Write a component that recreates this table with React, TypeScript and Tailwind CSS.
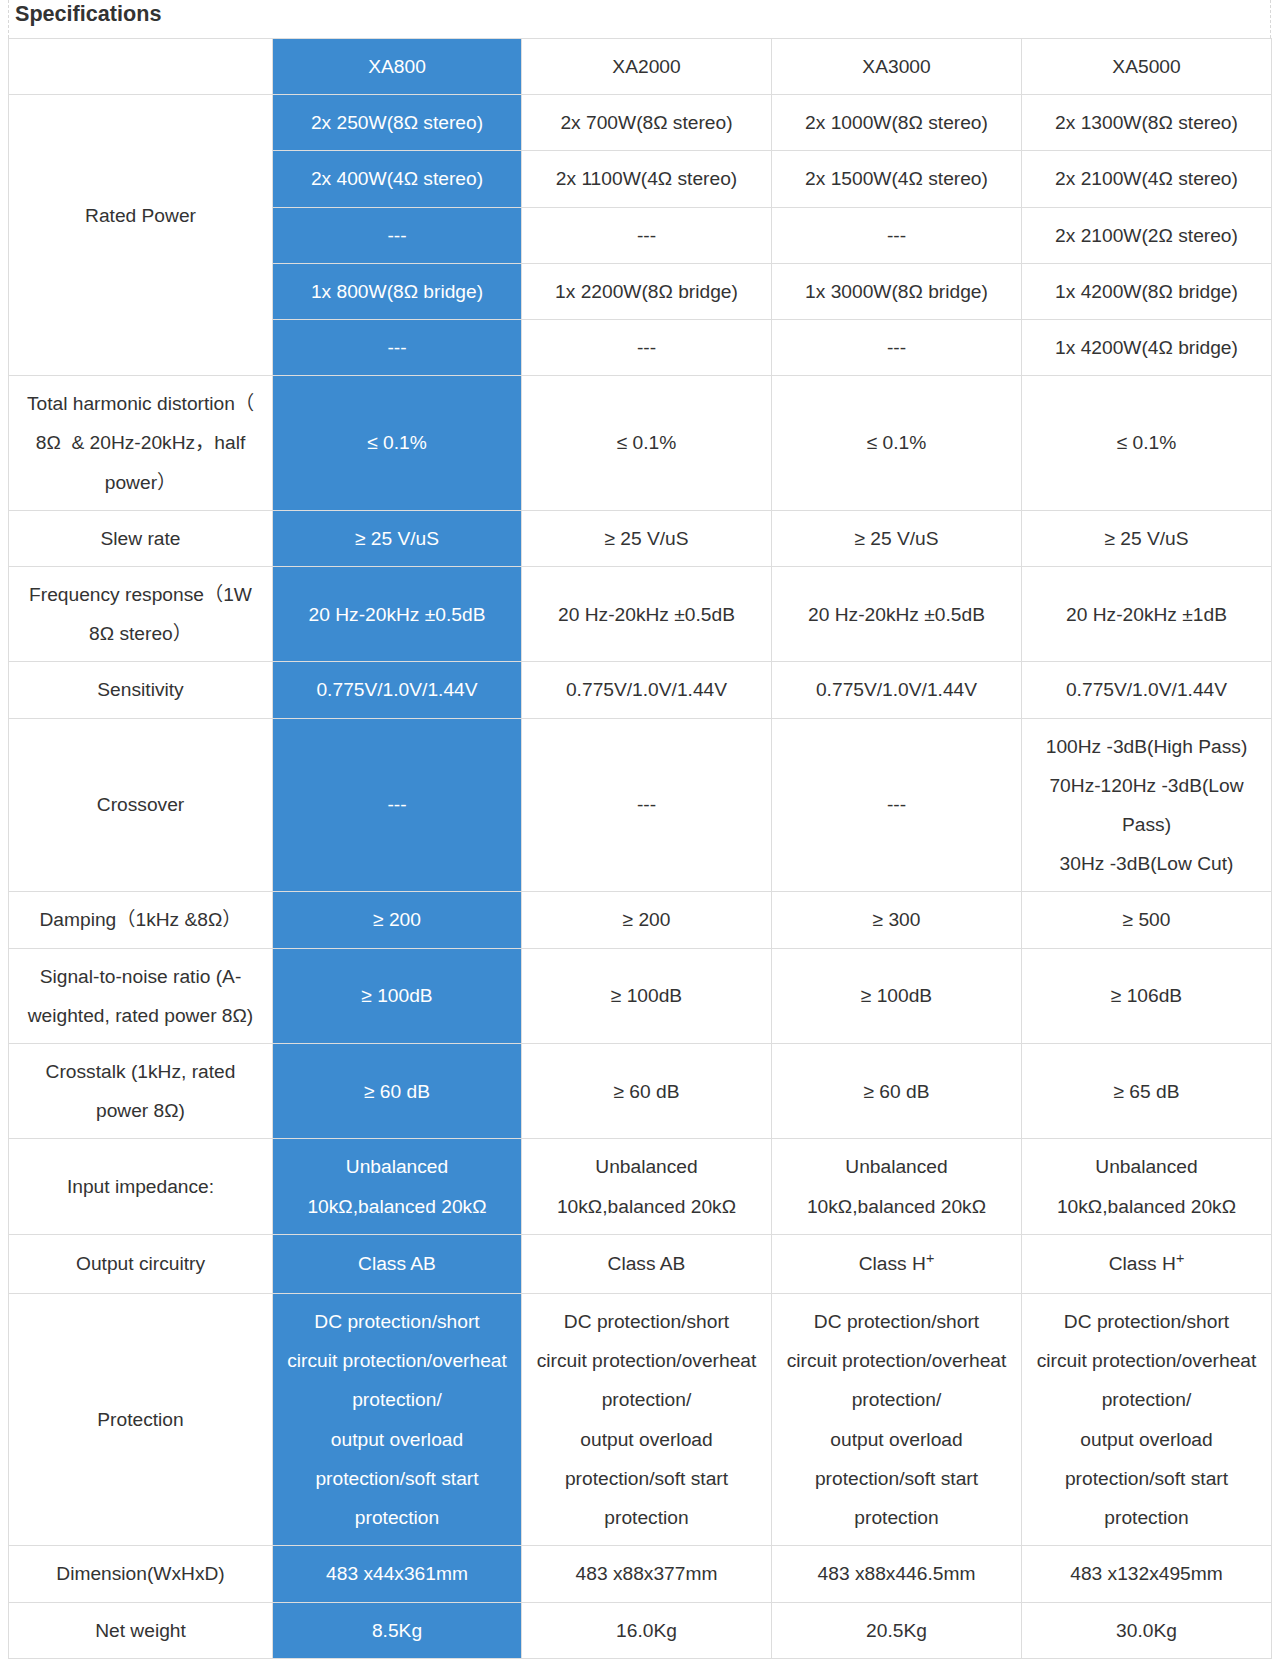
import React from 'react';

type Row = { label: React.ReactNode; cells: React.ReactNode[]; tall?: boolean };

const models = ['XA800', 'XA2000', 'XA3000', 'XA5000'];

const ratedPower: string[][] = [
  ['2x 250W(8Ω stereo)', '2x 700W(8Ω stereo)', '2x 1000W(8Ω stereo)', '2x 1300W(8Ω stereo)'],
  ['2x 400W(4Ω stereo)', '2x 1100W(4Ω stereo)', '2x 1500W(4Ω stereo)', '2x 2100W(4Ω stereo)'],
  ['---', '---', '---', '2x 2100W(2Ω stereo)'],
  ['1x 800W(8Ω bridge)', '1x 2200W(8Ω bridge)', '1x 3000W(8Ω bridge)', '1x 4200W(8Ω bridge)'],
  ['---', '---', '---', '1x 4200W(4Ω bridge)'],
];

const protection = (
  <div className="mx-auto w-[220px]">
    DC protection/short circuit protection/overheat protection/
    <br />
    output overload protection/soft start protection
  </div>
);

const impedance = (
  <>
    Unbalanced
    <br />
    10kΩ,balanced 20kΩ
  </>
);

const classH = (
  <>
    Class H<sup>+</sup>
  </>
);

const rows: Row[] = [
  {
    label: (
      <>
        Total harmonic distortion（
        <br />
        8Ω{'\u00a0'} & 20Hz-20kHz，half power）
      </>
    ),
    cells: ['≤ 0.1%', '≤ 0.1%', '≤ 0.1%', '≤ 0.1%'],
  },
  { label: 'Slew rate', cells: ['≥ 25 V/uS', '≥ 25 V/uS', '≥ 25 V/uS', '≥ 25 V/uS'] },
  {
    label: 'Frequency response（1W 8Ω stereo）',
    cells: ['20 Hz-20kHz ±0.5dB', '20 Hz-20kHz ±0.5dB', '20 Hz-20kHz ±0.5dB', '20 Hz-20kHz ±1dB'],
  },
  { label: 'Sensitivity', cells: ['0.775V/1.0V/1.44V', '0.775V/1.0V/1.44V', '0.775V/1.0V/1.44V', '0.775V/1.0V/1.44V'] },
  {
    label: 'Crossover',
    cells: [
      '---',
      '---',
      '---',
      <>
        100Hz -3dB(High Pass)
        <br />
        70Hz-120Hz -3dB(Low Pass)
        <br />
        30Hz -3dB(Low Cut)
      </>,
    ],
  },
  { label: 'Damping（1kHz &8Ω）', cells: ['≥ 200', '≥ 200', '≥ 300', '≥ 500'] },
  { label: 'Signal-to-noise ratio (A-weighted, rated power 8Ω)', cells: ['≥ 100dB', '≥ 100dB', '≥ 100dB', '≥ 106dB'] },
  { label: 'Crosstalk (1kHz, rated power 8Ω)', cells: ['≥ 60 dB', '≥ 60 dB', '≥ 60 dB', '≥ 65 dB'] },
  { label: 'Input impedance:', cells: [impedance, impedance, impedance, impedance] },
  { label: 'Output circuitry', cells: ['Class AB', 'Class AB', classH, classH], tall: true },
  { label: 'Protection', cells: [protection, protection, protection, protection] },
  { label: 'Dimension(WxHxD)', cells: ['483 x44x361mm', '483 x88x377mm', '483 x88x446.5mm', '483 x132x495mm'] },
  { label: 'Net weight', cells: ['8.5Kg', '16.0Kg', '20.5Kg', '30.0Kg'] },
];

const cellBase = 'border border-[#dddddd] px-[14px] text-center align-middle';

function Cell({ i, children, tall }: { i: number; children: React.ReactNode; tall?: boolean }) {
  return (
    <td
      className={
        cellBase +
        (tall ? ' py-[9.5px]' : ' py-2') +
        (i === 0 ? ' bg-[#3d8bd0] text-white' : ' text-[#333333]')
      }
    >
      {children}
    </td>
  );
}

export default function App() {
  return (
    <div
      className="min-h-screen bg-white pb-2"
      style={{ fontFamily: '"Liberation Sans", Arial, "Noto Sans CJK SC", sans-serif' }}
    >
      <div className="ml-2 mr-[3px] border-x border-dashed border-[#d8d8d8] h-[38px] pl-[6px] pt-[1px]">
        <h2 className="text-[21.6px] font-bold leading-[26px] text-[#333333]">Specifications</h2>
      </div>
      <table className="ml-2 w-[1263px] table-fixed border-collapse text-[19.2px] leading-[39.2px]">
        <colgroup>
          <col className="w-[264px]" />
          <col className="w-[249px]" />
          <col className="w-[250px]" />
          <col className="w-[250px]" />
          <col className="w-[250px]" />
        </colgroup>
        <tbody>
          <tr>
            <td className={cellBase + ' py-2'} />
            {models.map((m, i) => (
              <Cell key={m} i={i}>
                {m}
              </Cell>
            ))}
          </tr>
          {ratedPower.map((r, ri) => (
            <tr key={'rp' + ri}>
              {ri === 0 && (
                <td rowSpan={5} className={cellBase + ' text-[#333333]'}>
                  Rated Power
                  <br />
                  {'\u00a0'}
                </td>
              )}
              {r.map((c, i) => (
                <Cell key={i} i={i}>
                  {c}
                </Cell>
              ))}
            </tr>
          ))}
          {rows.map((row, ri) => (
            <tr key={ri}>
              <td className={cellBase + ' py-2 text-[#333333]'}>{row.label}</td>
              {row.cells.map((c, i) => (
                <Cell key={i} i={i} tall={row.tall}>
                  {c}
                </Cell>
              ))}
            </tr>
          ))}
        </tbody>
      </table>
    </div>
  );
}
